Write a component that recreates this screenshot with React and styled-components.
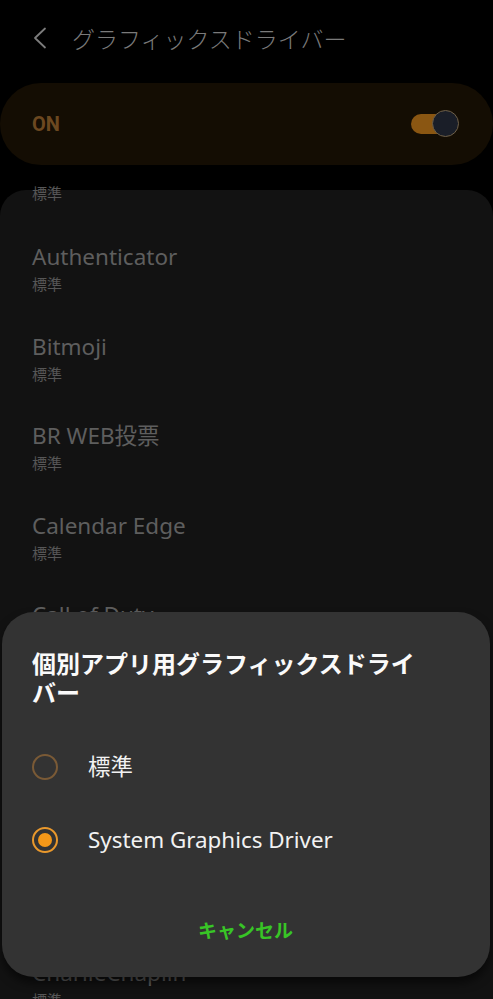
import styled, { createGlobalStyle } from "styled-components";

const GlobalStyle = createGlobalStyle`
  html, body {
    margin: 0;
    padding: 0;
    background: #000;
  }
  body {
    font-family: "Noto Sans", "Noto Sans CJK JP", sans-serif;
    -webkit-font-smoothing: antialiased;
  }
`;

const apps = [
  "Authenticator",
  "Bitmoji",
  "BR WEB投票",
  "Calendar Edge",
  "Call of Duty",
  "Camera",
  "Candy Crush",
  "Canva",
  "CharlieChaplin",
];

const App = () => {
  return (
    <Screen>
      <GlobalStyle />
      <Header>
        <BackIcon viewBox="0 0 16 22">
          <path d="M13 1.5 L3 11 L13 20.5" />
        </BackIcon>
        <Title>グラフィックスドライバー</Title>
      </Header>

      <MasterCard>
        <OnLabel>ON</OnLabel>
        <Switch>
          <Track />
          <Thumb />
        </Switch>
      </MasterCard>

      <ListCard>
        <Peek>標準</Peek>
        {apps.map((name) => (
          <AppItem key={name}>
            <AppName>{name}</AppName>
            <AppValue>標準</AppValue>
          </AppItem>
        ))}
      </ListCard>

      <Dialog>
        <DialogTitle>個別アプリ用グラフィックスドライバー</DialogTitle>
        <Options>
          <Option>
            <Radio />
            <OptionLabel>標準</OptionLabel>
          </Option>
          <Option>
            <Radio $checked />
            <OptionLabel>System Graphics Driver</OptionLabel>
          </Option>
        </Options>
        <CancelButton>キャンセル</CancelButton>
      </Dialog>
    </Screen>
  );
};

export default App;

const Screen = styled.div`
  position: relative;
  width: 493px;
  height: 999px;
  overflow: hidden;
  background: #000;
  display: flex;
  flex-direction: column;
`;

const Header = styled.div`
  height: 76px;
  display: flex;
  align-items: center;
  padding-left: 32px;
  flex-shrink: 0;
`;

const BackIcon = styled.svg`
  width: 16px;
  height: 22px;
  fill: none;
  stroke: #7c7c7c;
  stroke-width: 1.8;
  stroke-linecap: round;
  stroke-linejoin: round;
`;

const Title = styled.div`
  margin-left: 24px;
  font-family: "Noto Sans CJK JP", sans-serif;
  font-size: 23px;
  line-height: 30px;
  font-weight: 300;
  color: #7a7a7a;
`;

const MasterCard = styled.div`
  margin-top: 7px;
  height: 82px;
  border-radius: 41px;
  background: #140d03;
  display: flex;
  align-items: center;
  justify-content: space-between;
  padding: 0 34px 0 32px;
  flex-shrink: 0;
`;

const OnLabel = styled.div`
  font-family: "Roboto", "Noto Sans", sans-serif;
  font-size: 20px;
  font-weight: 700;
  color: #6c4820;
`;

const Switch = styled.div`
  position: relative;
  width: 48px;
  height: 28px;
`;

const Track = styled.div`
  position: absolute;
  left: 0;
  top: 4px;
  width: 40px;
  height: 20px;
  border-radius: 10px;
  background: #8a5612;
`;

const Thumb = styled.div`
  position: absolute;
  right: 0;
  top: 0;
  width: 25px;
  height: 25px;
  border-radius: 50%;
  background: #1a1e28;
  border: 1.5px solid #6f6048;
`;

const ListCard = styled.div`
  margin-top: 25px;
  flex: 1;
  border-radius: 26px;
  background: #121212;
  display: flex;
  flex-direction: column;
`;

const AppValue = styled.div`
  font-family: "Noto Sans CJK JP", sans-serif;
  font-size: 15px;
  line-height: 20px;
  color: #565656;
`;

const Peek = styled(AppValue)`
  margin-top: -7px;
  padding: 0 32px 21px;
`;

const AppItem = styled.div`
  height: 89.5px;
  box-sizing: border-box;
  padding: 19px 32px 0;
  flex-shrink: 0;
`;

const AppName = styled.div`
  font-size: 22.5px;
  line-height: 28px;
  color: #5e5e5e;
  margin-bottom: 3px;
`;

const Dialog = styled.div`
  position: absolute;
  left: 2px;
  right: 3px;
  top: 612px;
  height: 365px;
  box-sizing: border-box;
  border-radius: 32px;
  background: #333333;
  box-shadow: 0 6px 10px rgba(0, 0, 0, 0.55);
  padding: 36px 40px 0 30px;
  display: flex;
  flex-direction: column;
`;

const DialogTitle = styled.div`
  max-width: 396px;
  font-family: "Noto Sans CJK JP", sans-serif;
  font-size: 24px;
  line-height: 29px;
  font-weight: 700;
  color: #fafafa;
`;

const Options = styled.div`
  margin-top: 24px;
  display: flex;
  flex-direction: column;
`;

const Option = styled.div`
  height: 73px;
  display: flex;
  align-items: center;
`;

const Radio = styled.div`
  width: 26px;
  height: 26px;
  box-sizing: border-box;
  border-radius: 50%;
  border: 2px solid ${(p) => (p.$checked ? "#e9982c" : "#7a5a36")};
  display: flex;
  align-items: center;
  justify-content: center;
  flex-shrink: 0;

  &::after {
    content: "";
    display: ${(p) => (p.$checked ? "block" : "none")};
    width: 14px;
    height: 14px;
    border-radius: 50%;
    background: #f39718;
  }
`;

const OptionLabel = styled.div`
  margin-left: 30px;
  font-family: "Noto Sans", "Noto Sans CJK JP", sans-serif;
  font-size: 22.4px;
  line-height: 30px;
  color: #f2f2f2;
`;

const CancelButton = styled.div`
  margin-top: 36px;
  margin-left: -28px;
  margin-right: -37px;
  text-align: center;
  font-family: "Noto Sans CJK JP", sans-serif;
  font-size: 19px;
  line-height: 36px;
  font-weight: 700;
  color: #38c526;
`;
